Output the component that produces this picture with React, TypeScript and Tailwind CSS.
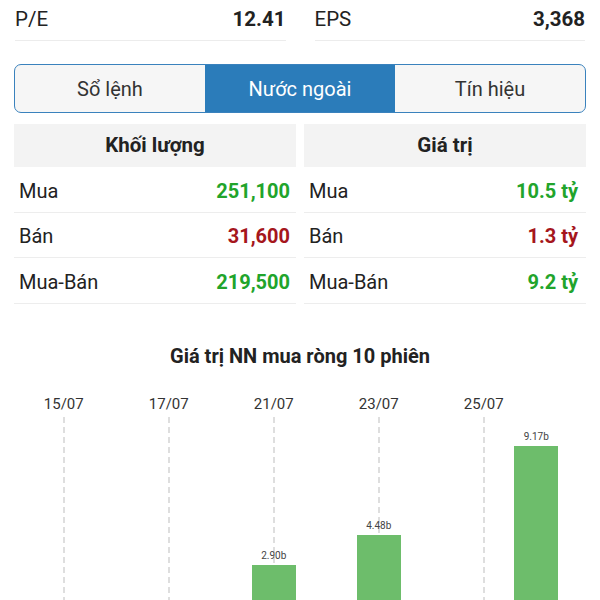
import React from "react";

const rows = [
  { label: "Mua", vol: "251,100", val: "10.5 tỷ", tone: "up" },
  { label: "Bán", vol: "31,600", val: "1.3 tỷ", tone: "down" },
  { label: "Mua-Bán", vol: "219,500", val: "9.2 tỷ", tone: "up" },
];

// 10 sessions, only every other one is labelled on the axis
const sessions = [
  { d: "15/07", v: -1.2 },
  { d: "16/07", v: -0.8 },
  { d: "17/07", v: -2.1 },
  { d: "18/07", v: -0.6 },
  { d: "21/07", v: 2.9 },
  { d: "22/07", v: -1.4 },
  { d: "23/07", v: 4.48 },
  { d: "24/07", v: -0.9 },
  { d: "25/07", v: -1.7 },
  { d: "28/07", v: 9.17 },
];

const PX_PER_B = 19;

function Stat({ label, value }: { label: string; value: string }) {
  return (
    <div className="flex h-[41px] items-center justify-between border-b border-[#ececec] pb-[2px]">
      <span className="text-[20.5px] text-[#222]">{label}</span>
      <span className="text-[20.5px] font-bold text-[#222]">{value}</span>
    </div>
  );
}

function Table({ title, field, padR }: { title: string; field: "vol" | "val"; padR: string }) {
  return (
    <div className="flex flex-col">
      <div className="flex h-[43px] items-center justify-center bg-[#f3f3f3] text-[20.5px] font-bold text-[#222]">
        {title}
      </div>
      {rows.map((r) => (
        <div
          key={r.label}
          className={`flex h-[45.5px] items-center justify-between border-b border-[#ededed] pl-[5px] pt-[3px] ${padR}`}
        >
          <span className="text-[20px] text-[#222]">{r.label}</span>
          <span
            className={`text-[20px] font-bold ${r.tone === "up" ? "text-[#21a42b]" : "text-[#a5161c]"}`}
          >
            {r[field]}
          </span>
        </div>
      ))}
    </div>
  );
}

export default function App() {
  return (
    <div className="h-[600px] w-[600px] overflow-hidden bg-white font-['Roboto',sans-serif]">
      {/* P/E, EPS */}
      <div className="grid grid-cols-2 gap-[29px] px-[15px]">
        <Stat label="P/E" value="12.41" />
        <Stat label="EPS" value="3,368" />
      </div>

      {/* Tabs */}
      <div className="mx-[14px] mt-[23px] grid h-[49px] grid-cols-3 overflow-hidden rounded-[7px] border-[1.5px] border-[#3a82bd] bg-[#f6f6f6] text-[20px]">
        <div className="flex items-center justify-center text-[#333]">Sổ lệnh</div>
        <div className="flex items-center justify-center bg-[#2b7cba] text-white">Nước ngoài</div>
        <div className="flex items-center justify-center text-[#333]">Tín hiệu</div>
      </div>

      {/* Volume / value tables */}
      <div className="mt-[11px] grid grid-cols-2 gap-[8px] pl-[14px] pr-[14px]">
        <Table title="Khối lượng" field="vol" padR="pr-[6px]" />
        <Table title="Giá trị" field="val" padR="pr-[8px]" />
      </div>

      {/* Chart */}
      <div className="mt-[38px] text-center text-[20px] font-bold leading-[28px] text-[#222]">
        Giá trị NN mua ròng 10 phiên
      </div>

      <div className="mx-auto mt-[24px] flex w-[525px]">
        {sessions.map((s, i) => {
          const labelled = i % 2 === 0;
          const h = Math.abs(s.v) * PX_PER_B;
          return (
            <div key={s.d} className="flex flex-1 flex-col items-center">
              <div className="h-[20px] text-[15px] leading-[20px] text-[#333]">{labelled ? s.d : ""}</div>
              <div className="relative flex h-[207px] w-full flex-col items-center justify-end">
                {labelled && (
                  <div className="absolute bottom-0 left-1/2 top-[3px] w-px -translate-x-1/2 bg-[linear-gradient(to_bottom,#bdbdbd_60%,transparent_0)] bg-[length:1px_10px]" />
                )}
                {s.v > 0 && (
                  <>
                    <div className="relative mb-[3px] text-[10px] leading-[12px] text-[#444]">
                      {s.v.toFixed(2)}b
                    </div>
                    <div className="relative w-[44px] bg-[#6dbd6b]" style={{ height: h }} />
                  </>
                )}
              </div>
              <div className="h-[60px] w-full">
                {s.v < 0 && <div className="mx-auto w-[44px] bg-[#e0645f]" style={{ height: h }} />}
              </div>
            </div>
          );
        })}
      </div>
    </div>
  );
}
